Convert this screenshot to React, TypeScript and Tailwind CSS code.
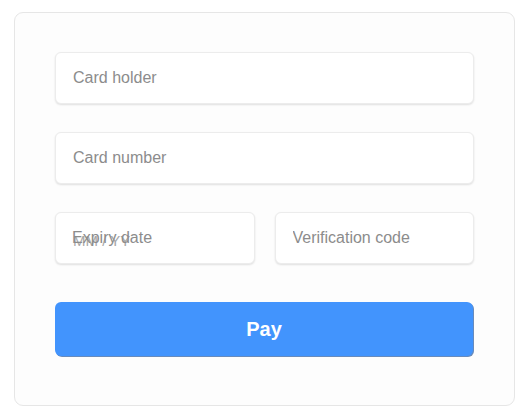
import React from "react";

const inputCls =
  "h-[52px] w-full min-w-0 rounded-[6px] border border-[#ececec] bg-white px-[17px] text-[16px] text-[#333] shadow-[0_1px_2px_rgba(0,0,0,0.12)] outline-none placeholder:text-[#8c8c8c]";

export default function App() {
  return (
    <div className="min-h-[420px] w-[530px] bg-white pt-[12px] pl-[14px]" style={{ fontFamily: '"Liberation Sans", Arial, sans-serif' }}>
      <div className="flex h-[394px] w-[501px] flex-col rounded-[9px] border border-[#e6e6e6] bg-[#fdfdfd] px-[40px] pt-[39px]">
        <input className={inputCls} placeholder="Card holder" />
        <input className={`${inputCls} mt-[28px]`} placeholder="Card number" />
        <div className="mt-[28px] grid grid-cols-2 gap-[20px]">
          <div className="relative min-w-0">
            <input className={`${inputCls} pt-[6px] placeholder:text-[#a8a8a8] placeholder:text-[15px]`} placeholder="MM / YY" />
            <span className="pointer-events-none absolute left-[17px] top-[16px] text-[16px] leading-[20px] text-[#8c8c8c]">Expiry date</span>
          </div>
          <input className={inputCls} placeholder="Verification code" />
        </div>
        <button className="mt-[38px] h-[54px] w-[418px] rounded-[6px] bg-[#4294fd] text-[20px] font-bold text-white shadow-[1px_1px_0_rgba(40,90,160,0.7)]">
          Pay
        </button>
      </div>
    </div>
  );
}
